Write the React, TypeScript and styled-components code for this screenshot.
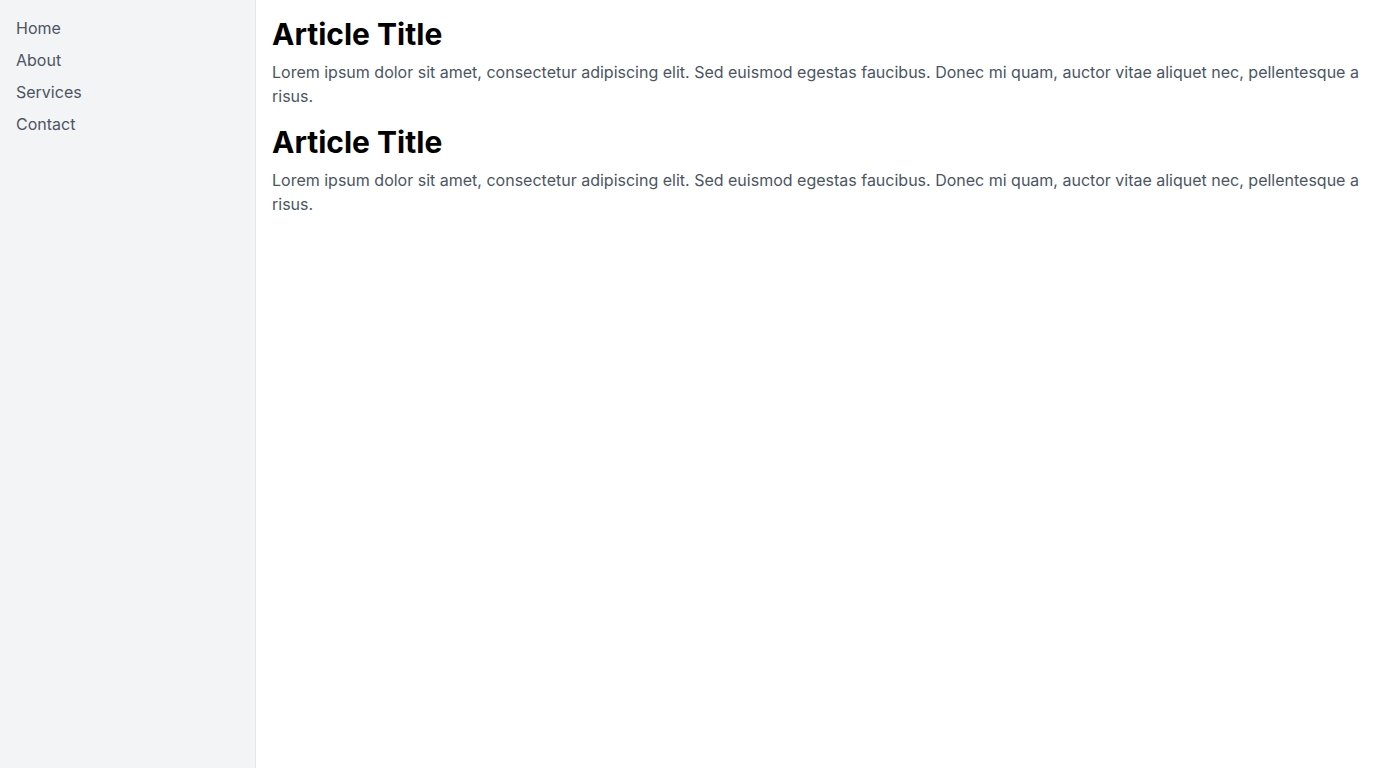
import React from "react";
import styled, { createGlobalStyle } from "styled-components";

const Global = createGlobalStyle`
  html, body { margin: 0; padding: 0; }
  body { font-family: Inter, "Noto Sans", sans-serif; background: #fff; }
  * { box-sizing: border-box; }
`;

const Layout = styled.div`
  display: flex;
  min-height: 100vh;
`;

const Sidebar = styled.aside`
  width: 256px;
  flex-shrink: 0;
  background: #f3f4f6;
  border-right: 1px solid #e5e7eb;
  padding: 16px;
`;

const NavList = styled.nav`
  display: flex;
  flex-direction: column;
  gap: 8px;
`;

const NavLink = styled.a`
  font-size: 16px;
  line-height: 24px;
  color: #4b5563;
  text-decoration: none;
  cursor: pointer;
`;

const Main = styled.main`
  flex: 1;
  padding: 16px;
  display: flex;
  flex-direction: column;
  gap: 16px;
`;

const Article = styled.article`
  display: flex;
  flex-direction: column;
  gap: 8px;
`;

const Title = styled.h2`
  margin: 0;
  font-size: 30px;
  line-height: 36px;
  font-weight: 700;
  color: #000;
`;

const Body = styled.p`
  margin: 0;
  font-size: 16px;
  line-height: 24px;
  color: #4b5563;
`;

const text =
  "Lorem ipsum dolor sit amet, consectetur adipiscing elit. Sed euismod egestas faucibus. Donec mi quam, auctor vitae aliquet nec, pellentesque a risus.";

export default function App() {
  return (
    <>
      <Global />
      <Layout>
        <Sidebar>
          <NavList>
            {["Home", "About", "Services", "Contact"].map((n) => (
              <NavLink key={n}>{n}</NavLink>
            ))}
          </NavList>
        </Sidebar>
        <Main>
          {[0, 1].map((i) => (
            <Article key={i}>
              <Title>Article Title</Title>
              <Body>{text}</Body>
            </Article>
          ))}
        </Main>
      </Layout>
    </>
  );
}
